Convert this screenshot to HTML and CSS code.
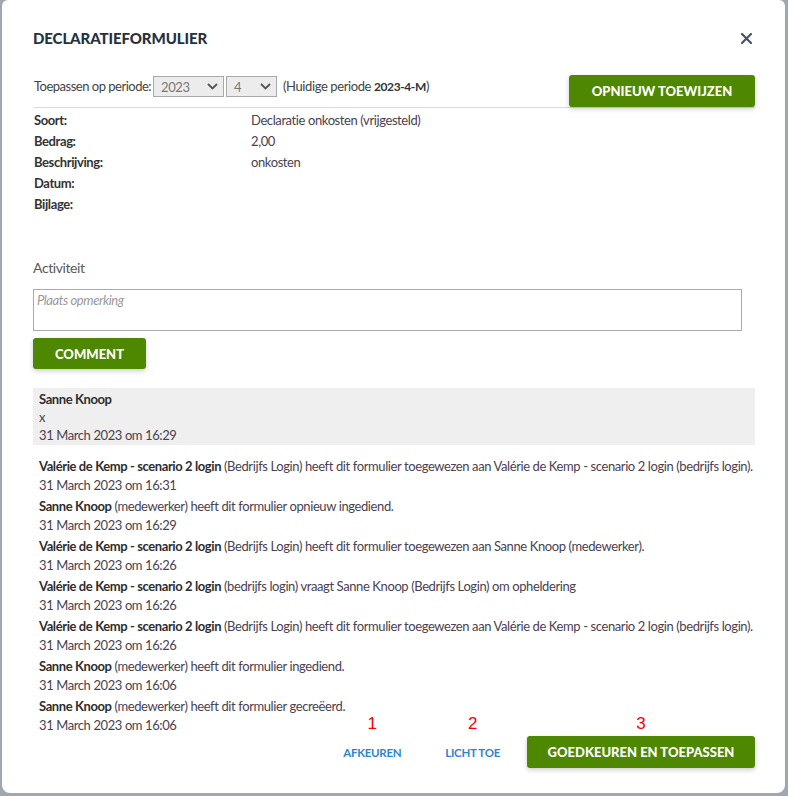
FILE: index.html
```html
<!DOCTYPE html>
<html>
<head>
    <title>Declaratieformulier</title>
    <link rel="stylesheet" href="styles.css">
</head>
<body>
    <div class="modal">
        <div class="modal-header">
            <h1>DECLARATIEFORMULIER</h1>
            <svg class="close" width="11" height="11" viewBox="0 0 11 11">
                <path d="M1 1 L10 10 M10 1 L1 10" stroke="#4a5363" stroke-width="2.2" stroke-linecap="round"/>
            </svg>
        </div>

        <div class="period-row">
            <span class="period-label">Toepassen op periode:</span>
            <div class="select year">
                <span>2023</span>
                <svg width="11" height="7" viewBox="0 0 11 7"><path d="M1 1 L5.5 5.5 L10 1" fill="none" stroke="#555" stroke-width="1.8"/></svg>
            </div>
            <div class="select month">
                <span>4</span>
                <svg width="11" height="7" viewBox="0 0 11 7"><path d="M1 1 L5.5 5.5 L10 1" fill="none" stroke="#555" stroke-width="1.8"/></svg>
            </div>
            <span class="period-current">(Huidige periode <b>2023-4-M</b>)</span>
            <button class="btn btn-assign">OPNIEUW TOEWIJZEN</button>
        </div>

        <div class="details">
            <div class="label">Soort:</div><div>Declaratie onkosten (vrijgesteld)</div>
            <div class="label">Bedrag:</div><div>2,00</div>
            <div class="label">Beschrijving:</div><div>onkosten</div>
            <div class="label">Datum:</div><div></div>
            <div class="label">Bijlage:</div><div></div>
        </div>

        <h2 class="activity-title">Activiteit</h2>
        <textarea class="remark" placeholder="Plaats opmerking"></textarea>
        <button class="btn btn-comment">COMMENT</button>

        <div class="comment">
            <b>Sanne Knoop</b>
            <div>x</div>
            <div>31 March 2023 om 16:29</div>
        </div>

        <ul class="log">
            <li>
                <div><b>Valérie de Kemp - scenario 2 login</b> (Bedrijfs Login) heeft dit formulier toegewezen aan Valérie de Kemp - scenario 2 login (bedrijfs login).</div>
                <div>31 March 2023 om 16:31</div>
            </li>
            <li>
                <div><b>Sanne Knoop</b> (medewerker) heeft dit formulier opnieuw ingediend.</div>
                <div>31 March 2023 om 16:29</div>
            </li>
            <li>
                <div><b>Valérie de Kemp - scenario 2 login</b> (Bedrijfs Login) heeft dit formulier toegewezen aan Sanne Knoop (medewerker).</div>
                <div>31 March 2023 om 16:26</div>
            </li>
            <li>
                <div><b>Valérie de Kemp - scenario 2 login</b> (bedrijfs login) vraagt Sanne Knoop (Bedrijfs Login) om opheldering</div>
                <div>31 March 2023 om 16:26</div>
            </li>
            <li>
                <div><b>Valérie de Kemp - scenario 2 login</b> (Bedrijfs Login) heeft dit formulier toegewezen aan Valérie de Kemp - scenario 2 login (bedrijfs login).</div>
                <div>31 March 2023 om 16:26</div>
            </li>
            <li>
                <div><b>Sanne Knoop</b> (medewerker) heeft dit formulier ingediend.</div>
                <div>31 March 2023 om 16:06</div>
            </li>
            <li>
                <div><b>Sanne Knoop</b> (medewerker) heeft dit formulier gecreëerd.</div>
                <div>31 March 2023 om 16:06</div>
            </li>
        </ul>

        <div class="modal-footer">
            <button class="link-btn">AFKEUREN<span class="marker">1</span></button>
            <button class="link-btn">LICHT TOE<span class="marker">2</span></button>
            <button class="btn btn-approve">GOEDKEUREN EN TOEPASSEN<span class="marker">3</span></button>
        </div>
    </div>
</body>
</html>
```

FILE: styles.css
```css
body {
    margin: 0;
    padding: 0;
    background-color: #9ea8b3;
    font-family: Lato, "Noto Sans", sans-serif;
    font-size: 13px;
    letter-spacing: -0.4px;
    color: #4b4150;
}

.modal {
    box-sizing: border-box;
    background-color: #fff;
    margin: 0 3px 0 2px;
    height: 793px;
    border-radius: 6px 6px 8px 8px;
    padding: 0 30px 24px 31px;
}

.modal-header {
    display: flex;
    justify-content: space-between;
    align-items: center;
    padding-top: 28px;
    height: 20px;
}

.modal-header h1 {
    margin: 0;
    font-size: 15px;
    font-weight: 900;
    line-height: 20px;
    letter-spacing: -0.1px;
    color: #26313f;
}

.close {
    margin-right: 3px;
}

.period-row {
    display: flex;
    align-items: flex-start;
    margin-top: 27px;
    border-bottom: 1px solid #dcdcdc;
}

.period-label {
    line-height: 21px;
    margin-top: 1px;
    margin-left: 1px;
    margin-right: 2px;
    color: #444;
    letter-spacing: -0.5px;
}

.select {
    box-sizing: border-box;
    display: flex;
    justify-content: space-between;
    align-items: center;
    height: 21px;
    margin-top: 1px;
    padding: 0 5px 0 7px;
    background-color: #ececec;
    border: 1px solid #a9a9a9;
    color: #777;
}

.select.year {
    width: 71px;
    margin-right: 2px;
}

.select.month {
    width: 51px;
}

.period-current {
    line-height: 21px;
    margin-top: 1px;
    margin-left: 6px;
    color: #444;
}

.period-current b {
    font-size: 12px;
    color: #333;
}

.btn {
    position: relative;
    border: none;
    border-radius: 3px;
    background-color: #4e8700;
    color: #fff;
    font-family: Lato, "Noto Sans", sans-serif;
    font-weight: 900;
    font-size: 13px;
    letter-spacing: 0;
    box-shadow: 0 2px 5px rgba(0, 0, 0, 0.2);
    cursor: pointer;
}

.btn-assign {
    margin-left: auto;
    width: 186px;
    height: 32px;
}

.details {
    display: grid;
    grid-template-columns: 218px 1fr;
    grid-auto-rows: 21px;
    margin-top: 2px;
    line-height: 21px;
}

.details .label {
    font-weight: bold;
    color: #333;
    padding-left: 1px;
}

.activity-title {
    margin: 43px 0 0 0;
    font-size: 14px;
    font-weight: normal;
    line-height: 20px;
    color: #5a5a5a;
}

.remark {
    display: block;
    box-sizing: border-box;
    width: 709px;
    height: 42px;
    margin-top: 11px;
    padding: 2px 3px;
    border: 1px solid #aaa;
    resize: none;
    font-family: Lato, "Noto Sans", sans-serif;
    font-size: 13px;
    letter-spacing: -0.4px;
}

.remark::placeholder {
    font-style: italic;
    color: #999;
}

.btn-comment {
    display: block;
    margin-top: 7px;
    width: 113px;
    height: 31px;
}

.comment {
    margin-top: 19px;
    padding: 2px 5px 1px 6px;
    background-color: #efefef;
    line-height: 18px;
}

.comment b,
.log b {
    color: #2e2e2e;
}

.log {
    list-style: none;
    margin: 12px 0 0 0;
    padding: 0 0 0 6px;
    display: flex;
    flex-direction: column;
    gap: 2px;
    line-height: 19px;
}

.modal-footer {
    display: flex;
    justify-content: flex-end;
    align-items: center;
    margin-top: 1px;
}

.link-btn {
    position: relative;
    border: none;
    background: none;
    padding: 0 22px;
    height: 32px;
    font-family: Lato, "Noto Sans", sans-serif;
    font-weight: bold;
    font-size: 11.5px;
    letter-spacing: -0.3px;
    color: #2f86d0;
    cursor: pointer;
}

.btn-approve {
    margin-left: 5px;
    width: 228px;
    height: 32px;
}

.marker {
    position: absolute;
    top: -22px;
    left: 0;
    right: 0;
    text-align: center;
    font-family: "Liberation Sans", sans-serif;
    font-weight: normal;
    font-size: 17px;
    color: #f00;
    letter-spacing: 0;
}
```
